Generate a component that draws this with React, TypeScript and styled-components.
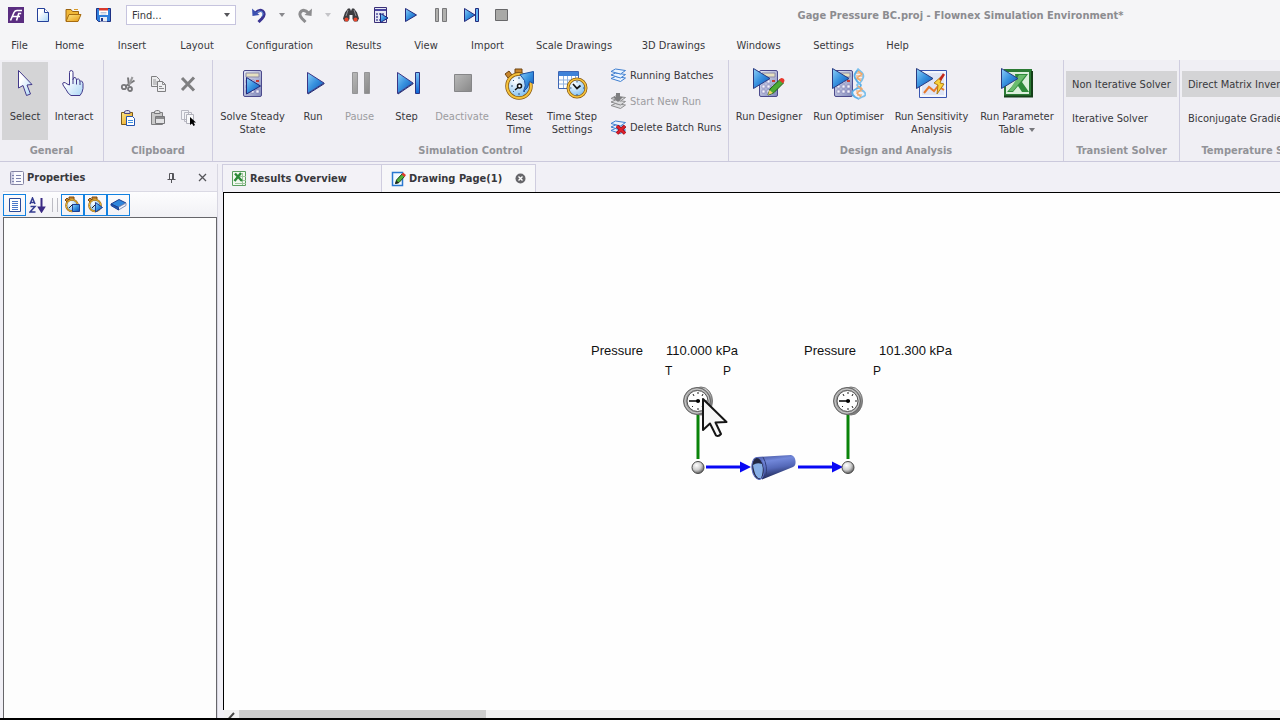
import React from 'react';
import styled, { createGlobalStyle, css } from 'styled-components';

const Global = createGlobalStyle`
  * { box-sizing: border-box; }
  body {
    margin: 0;
    background: #f5f5f7;
    color: #38383c;
    font: 11px/13px "DejaVu Sans Condensed", "DejaVu Sans", sans-serif;
  }
  button, select { font: inherit; color: inherit; }
  svg { display: block; flex: none; }
`;

/* ---------- layout ---------- */

const Shell = styled.div`
  display: flex;
  flex-direction: column;
  height: 100vh;
  overflow: hidden;
  border-bottom: 2px solid #000;
`;

const TitleBar = styled.header`
  display: flex;
  align-items: center;
  flex: none;
  height: 30px;
  padding-left: 8px;
`;

const Logo = styled.span`
  margin-right: 4px;
`;

const bare = css`
  border: 0;
  margin: 0;
  padding: 0;
  background: none;
`;

const QuickButton = styled.button<{ $narrow?: boolean }>`
  ${bare}
  display: flex;
  align-items: center;
  justify-content: center;
  flex: none;
  width: ${p => (p.$narrow ? 16 : 30)}px;
  height: 20px;
`;

const FindBox = styled.label`
  display: flex;
  align-items: center;
  position: relative;
  flex: none;
  width: 110px;
  height: 20px;
  margin: 0 8px;
  background: #fff;
  border: 1px solid #c6c4de;
  svg { position: absolute; right: 5px; pointer-events: none; }
`;

const FindSelect = styled.select`
  ${bare}
  appearance: none;
  width: 100%;
  height: 100%;
  padding-left: 5px;
  outline: 0;
`;

const Title = styled.h1`
  flex: 1;
  margin: 0;
  padding-left: 125px;
  font-size: 11px;
  font-weight: bold;
  color: #8c8c90;
  text-align: center;
  white-space: nowrap;
`;

const MenuBar = styled.nav`
  display: flex;
  flex: none;
  height: 30px;
`;

const MenuItem = styled.button<{ $w: number }>`
  ${bare}
  flex: none;
  width: ${p => p.$w}px;
  text-align: center;
  white-space: nowrap;
`;

const Ribbon = styled.section`
  display: flex;
  flex: none;
  overflow: hidden;
  background: #f0eff4;
  border-bottom: 1px solid #cbc9dc;
`;

const Group = styled.div<{ $w?: number }>`
  display: flex;
  flex-direction: column;
  flex: none;
  width: ${p => (p.$w ? `${p.$w}px` : 'auto')};
  padding: 2px 2px 0;
  border-right: 1px solid #cfcddf;
`;

const GroupBody = styled.div`
  display: flex;
  height: 78px;
`;

const GroupLabel = styled.h2`
  margin: 0;
  padding-top: 1px;
  font-size: 11px;
  font-weight: bold;
  line-height: 20px;
  color: #929398;
  text-align: center;
  white-space: nowrap;
`;

const BigButton = styled.button<{ $w: number; $on?: boolean }>`
  ${bare}
  display: flex;
  flex-direction: column;
  align-items: center;
  gap: 10px;
  flex: none;
  width: ${p => p.$w}px;
  padding-top: 6px;
  white-space: nowrap;
  background: ${p => (p.$on ? '#d4d4d6' : 'none')};
  &:disabled { color: #9c9ca0; }
`;

const Caption = styled.span`
  display: block;
  white-space: pre-line;
`;

const ClipGrid = styled.div`
  display: grid;
  grid-template-columns: repeat(3, 30px);
  grid-template-rows: repeat(2, 34px);
  justify-content: center;
  padding-top: 5px;
  width: 100%;
`;

const IconButton = styled.button`
  ${bare}
  display: flex;
  align-items: center;
  justify-content: center;
`;

const SmallList = styled.div`
  display: flex;
  flex-direction: column;
  margin-left: 10px;
`;

const SmallButton = styled.button`
  ${bare}
  display: flex;
  align-items: center;
  gap: 4px;
  height: 26px;
  white-space: nowrap;
  &:disabled { color: #9c9ca0; }
`;

const SolverList = styled.div`
  display: flex;
  flex-direction: column;
  gap: 8px;
  height: 78px;
  padding-top: 9px;
`;

const SolverButton = styled.button<{ $on?: boolean }>`
  ${bare}
  height: 26px;
  padding: 0 6px;
  text-align: left;
  white-space: nowrap;
  background: ${p => (p.$on ? '#d4d4d6' : 'none')};
`;

const Workspace = styled.main`
  display: flex;
  flex: 1;
  min-height: 0;
  padding-top: 2px;
  background: #f1f0f6;
`;

const Side = styled.aside`
  display: flex;
  flex-direction: column;
  flex: none;
  width: 218px;
  margin-right: 4px;
  padding-left: 3px;
  border-right: 1px solid #d8d7e2;
`;

const SideHead = styled.div`
  display: flex;
  align-items: center;
  height: 28px;
  padding: 0 10px 0 7px;
  border-bottom: 1px solid #dad9e4;
`;

const PanelTitle = styled.h2`
  flex: 1;
  margin: 0 0 0 3px;
  font-size: 11px;
  font-weight: bold;
`;

const HeadButton = styled.button`
  ${bare}
  margin-left: 22px;
`;

const SideTools = styled.div`
  display: flex;
  align-items: center;
  height: 25px;
  background: linear-gradient(#fdfdfe, #f1f1f5);
`;

const ToolButton = styled.button<{ $on?: boolean }>`
  ${bare}
  display: flex;
  align-items: center;
  justify-content: center;
  width: 23px;
  height: 22px;
  margin-right: ${p => (p.$on ? 0 : 3)}px;
  border: 1px solid ${p => (p.$on ? '#1281e0' : 'transparent')};
`;

const Bars = styled.span`
  width: 6px;
  height: 14px;
  margin-right: 3px;
  border: solid #bcbcc4;
  border-width: 0 1px;
`;

const PropertyArea = styled.div`
  flex: 1;
  background: #fdfdfd;
  border: 1px solid #66666a;
  border-bottom: 0;
`;

const Documents = styled.section`
  display: flex;
  flex-direction: column;
  flex: 1;
  min-width: 0;
`;

const Tabs = styled.div`
  display: flex;
  height: 28px;
`;

const Tab = styled.button<{ $on?: boolean }>`
  ${bare}
  display: flex;
  align-items: center;
  gap: 3px;
  min-width: ${p => (p.$on ? 154 : 160)}px;
  padding: 0 9px;
  font-weight: bold;
  white-space: nowrap;
  border: 1px solid #cfcddf;
  border-bottom: 0;
  border-left-width: ${p => (p.$on ? 0 : 1)}px;
  background: ${p => (p.$on ? '#f7f7f9' : '#f3f2f7')};
`;

const TabClose = styled.span`
  margin-left: auto;
`;

const Canvas = styled.div`
  position: relative;
  flex: 1;
  min-height: 0;
  margin-left: 1px;
  overflow: hidden;
  background: #fefefe;
  border: solid #000;
  border-width: 1px 0 0 1px;
`;

const Network = styled.svg`
  position: absolute;
  left: 440px;
  top: 180px;
`;

const Note = styled.span<{ $x: number; $y: number; $small?: boolean }>`
  position: absolute;
  left: ${p => p.$x}px;
  top: ${p => p.$y}px;
  font: ${p => (p.$small ? 12 : 13)}px/16px "Liberation Sans", Arial, sans-serif;
  color: #111;
  white-space: nowrap;
`;

const Scroll = styled.div`
  display: flex;
  flex: none;
  height: 8px;
  margin-left: 2px;
  overflow: hidden;
  background: #f0f0f1;
`;

const Thumb = styled.div`
  width: 247px;
  background: #cdcdcd;
`;

/* ---------- icons ---------- */

const SharedGradients = styled.svg`
  position: absolute;
`;

const Defs = () => (
  <SharedGradients width="0" height="0" aria-hidden="true">
    <defs>
      <linearGradient id="blue" x1="0" y1="0" x2="1" y2="1">
        <stop offset="0" stopColor="#8fd0f8" />
        <stop offset=".45" stopColor="#3a94e0" />
        <stop offset="1" stopColor="#0850b4" />
      </linearGradient>
      <linearGradient id="bar" x1="0" y1="0" x2="0" y2="1">
        <stop offset="0" stopColor="#7cc4f6" />
        <stop offset="1" stopColor="#0b64d4" />
      </linearGradient>
      <linearGradient id="grey" x1="0" y1="0" x2="1" y2="1">
        <stop offset="0" stopColor="#b9b9b9" />
        <stop offset="1" stopColor="#888" />
      </linearGradient>
      <linearGradient id="ice" x1="0" y1="0" x2="1" y2="1">
        <stop offset=".3" stopColor="#fff" />
        <stop offset="1" stopColor="#a9d6f6" />
      </linearGradient>
      <linearGradient id="case" x1="0" y1="0" x2="1" y2="1">
        <stop offset="0" stopColor="#e6e9f5" />
        <stop offset="1" stopColor="#8088ba" />
      </linearGradient>
      <linearGradient id="gold" x1="0" y1="0" x2="1" y2="1">
        <stop offset="0" stopColor="#ffe98a" />
        <stop offset="1" stopColor="#e59a12" />
      </linearGradient>
      <radialGradient id="dial" cx=".35" cy=".3" r=".8">
        <stop offset="0" stopColor="#fff" />
        <stop offset="1" stopColor="#6cb6f0" />
      </radialGradient>
      <radialGradient id="ball" cx=".38" cy=".32" r=".7">
        <stop offset="0" stopColor="#fff" />
        <stop offset=".55" stopColor="#cfcfcf" />
        <stop offset="1" stopColor="#5c5c5c" />
      </radialGradient>
      <linearGradient id="rim" x1="0" y1="0" x2="1" y2="1">
        <stop offset="0" stopColor="#777" />
        <stop offset=".4" stopColor="#d2d2d2" />
        <stop offset="1" stopColor="#555" />
      </linearGradient>
      <linearGradient id="pipe" x1="0" y1="0" x2=".25" y2="1">
        <stop offset="0" stopColor="#3f4d96" />
        <stop offset=".3" stopColor="#7288da" />
        <stop offset=".6" stopColor="#5468b8" />
        <stop offset="1" stopColor="#1c2450" />
      </linearGradient>
    </defs>
  </SharedGradients>
);

type IconProps = { w?: number; h?: number; children?: React.ReactNode };
const Icon = ({ w = 16, h = w > 20 ? 32 : 16, children }: IconProps) => (
  <svg width={w} height={h} viewBox={`0 0 ${w} ${h}`} fill="none" aria-hidden="true">{children}</svg>
);

const CaretIcon = ({ color = '#55555a' }: { color?: string }) => (
  <Icon w={6} h={4}><path d="M0 0h6L3 4z" fill={color} /></Icon>
);

const LogoIcon = () => (
  <Icon>
    <path d="M0 0h16v16H0z" fill="#5a2d80" />
    <path d="M2.500 13.500 6 5.500Q7 3.500 9 3.500h5M4.500 9.500H12M8.500 13.500l2.200-7h2.500" stroke="#fff" strokeWidth="1.600" />
  </Icon>
);

const NewIcon = () => (
  <Icon w={14}>
    <path d="M1.500 1.500h7l4 4v9h-11z" fill="url(#ice)" stroke="#24409a" />
    <path d="M8.500 1.500v4h4" fill="#fff" stroke="#24409a" />
  </Icon>
);

const OpenIcon = () => (
  <Icon w={17}>
    <path d="M1 14V2.500h5l1.500 2h6V8" fill="#f0b838" stroke="#9c6410" />
    <path d="M1 14.500 4 7.500h12l-3 7z" fill="url(#gold)" stroke="#a86c10" />
    <path d="M9 2.500h4" stroke="#d89a28" />
  </Icon>
);

const SaveIcon = () => (
  <Icon w={15}>
    <path d="M.5 1.500h14v13h-12l-2-2z" fill="#2f7fdc" stroke="#1d3184" />
    <path d="M3 2h9v6H3z" fill="#fff" />
    <path d="M3 1h9v2.500H3z" fill="#d83a2c" />
    <path d="M4.500 5.500h6M4.500 7h6" stroke="#b9c4d8" />
    <path d="M4 10h7v4.500H4z" fill="#e8ecf4" />
    <path d="M5 11h2v3H5z" fill="#1d3184" />
  </Icon>
);

const UndoIcon = ({ off }: { off?: boolean }) => (
  <Icon>
    <g transform={off ? 'matrix(-1 0 0 1 16 0)' : undefined}>
      <path d="M4 6.500Q8 2 11.500 4 15 7 11 11.500L7.500 15" stroke={off ? '#8d8d8f' : '#3b3492'} strokeWidth="3" />
      {!off && <path d="M5 6Q8 3 11 4.500q2.500 2 0 5" stroke="#5b8bd8" />}
      <path d="M1 1.500 1.500 9l7-1z" fill={off ? '#8d8d8f' : '#3b50b0'} />
    </g>
  </Icon>
);

const BinocularsIcon = () => (
  <Icon>
    <path d="M5 1.500h2L8 4l1-2.500h2l3 4 2 6-1.500 3H11L9.500 12V8h-3v4L5 14.500H1.500L0 11.500l2-6z" fill="#3c3c40" />
    <path d="M5 3 3 9M11 3l2 6" stroke="#8e8e94" />
    <circle cx="3.500" cy="12.500" r="2" fill="#e8462c" />
    <circle cx="12.500" cy="12.500" r="2" fill="#e8462c" />
  </Icon>
);

const SmallCalcIcon = () => (
  <Icon>
    <path d="M1.500.5h12v15h-12z" fill="#e6e8f4" stroke="#3a2f78" />
    <path d="M2 2h11v2H2z" fill="#4a46a0" />
    <path d="M3 6h2v2H3zM6 6h2v2H6zM9 6h2v2H9zM3 9h2v2H3zM3 12h2v2H3zM6 12h2v2H6z" fill="#7778b4" />
    <path d="M7.500 6.500 15 11l-7.500 4.500z" fill="url(#blue)" stroke="#20277c" />
  </Icon>
);

const PlayIcon = () => (
  <Icon w={14}><path d="M1.500 1.500 12.500 8l-11 6.500z" fill="url(#blue)" stroke="#242a7c" /></Icon>
);

const PauseIcon = () => (
  <Icon w={14}>
    <path d="M1.500 1.500h3v13h-3zM8.500 1.500h4v13h-4z" fill="#b0b0ae" stroke="#78787a" />
  </Icon>
);

const StepIcon = () => (
  <Icon w={17}>
    <path d="M1.500 1.500 12 8 1.500 14.500z" fill="url(#blue)" stroke="#242a7c" />
    <path d="M12.500 1.500h3v13h-3z" fill="#62b4f2" stroke="#242a7c" />
  </Icon>
);

const StopIcon = () => (
  <Icon w={13}><path d="M.5 2.500h12v11H.5z" fill="#a9a9a7" stroke="#68686a" /></Icon>
);

const SelectIcon = () => (
  <Icon w={32}>
    <path d="M9.500 2.500v17.500l4.500-2.500 3.500 10 4-1.500-3.500-9 5-.5z" fill="url(#ice)" stroke="#42388a" />
  </Icon>
);

const HandIcon = () => (
  <Icon w={32}>
    <path
      d="M11.500 17V4.500q0-2 1.750-2t1.750 2v7q.5-2.500 2-2t1.500 2.500q.5-1.500 2-1t1.500 2.500q.5-1 1.500-.5t1.500 2.500v5q-.5 4-3 7h-9q-3-1.500-5-6l-3-4.500q-1-2.500 1-2.500 1.500 0 3 1.500z"
      fill="url(#ice)" stroke="#42388a"
    />
    <path d="M15 11v5M18.500 12v4.500M22 13.500V17" stroke="#42388a" />
  </Icon>
);

const CutIcon = () => (
  <Icon>
    <path d="M8 1.500 9 10M14.500 4.500 5 10.500" stroke="#777779" strokeWidth="2" />
    <path d="m12.500 1-3.500 8" stroke="#9a9a9c" strokeWidth="2" />
    <circle cx="4" cy="11" r="2.200" stroke="#77777a" strokeWidth="1.800" />
    <circle cx="10" cy="13" r="2" stroke="#77777a" strokeWidth="1.800" />
  </Icon>
);

const CopyIcon = () => (
  <Icon w={17}>
    <path d="M1.500.5h5l3 3v7h-8z" fill="#ececee" stroke="#7e7e80" />
    <path d="M3 4h3M3 6h4M3 8h4" stroke="#9a9a9c" />
    <path d="M7.500 5.500h5l3 3v7h-8z" fill="#f0f0f2" stroke="#7e7e80" />
    <path d="M12.500 5.500v3h3M9 10.500h3M9 12.500h5" stroke="#8e8e90" />
  </Icon>
);

const CrossIcon = () => (
  <Icon><path d="m2 2 12 12.500M14 1.500 2 14" stroke="#7f7f81" strokeWidth="3" /></Icon>
);

const PasteIcon = () => (
  <Icon>
    <path d="M1.500 2.500h11v12h-11z" fill="url(#gold)" stroke="#7a5a1a" />
    <path d="M4.500 3.500v-2l2-1h2l1.500 1v2z" fill="#d8d8e4" stroke="#4e467e" />
    <path d="M6.500 6.500h6l2 2v7h-8z" fill="#fff" stroke="#2353b0" />
    <path d="M8 10.500h5M8 12.500h5" stroke="#3f8fe0" />
  </Icon>
);

const PasteSpecialIcon = () => (
  <Icon>
    <path d="M1.500 2.500h11v12h-11z" fill="#c9c9c9" stroke="#7e7e80" />
    <path d="M4.500 3.500v-2l2-1h2l1.500 1v2z" fill="#ddd" stroke="#77777a" />
    <path d="M5.500 6.500h9v7h-9z" fill="#e2e2e4" stroke="#77777a" />
    <path d="M6 8h8" stroke="#8a8a8c" strokeWidth="2" />
  </Icon>
);

const PickCopyIcon = () => (
  <Icon>
    <path d="M1.500.5h7v9h-7zM4.500 2.500h7v9h-7z" fill="#f4f4f8" stroke="#b8b8c2" />
    <path d="M6.500 4.500h7v9h-7z" fill="#f8f8fa" stroke="#b0b0ba" />
    <path d="M10 7v8l2-1.500 1.500 2.500 1.500-1-1.500-2.500H16z" fill="#000" />
  </Icon>
);

const CalcBody = () => (
  <>
    <rect x="6.500" y="2.500" width="18" height="26" rx="1.500" fill="url(#case)" stroke="#4c4a8c" />
    <path d="M9 5h13v4H9z" fill="#e6e1c0" stroke="#8d8aa8" />
    <path d="M9 12h3v3H9zM14 12h3v3h-3zM9 17h3v3H9zM14 17h3v3h-3zM19 17h3v3h-3zM9 22h3v3H9zM14 22h3v3h-3zM19 22h3v3h-3z" fill="#f4f4fa" stroke="#7472ac" strokeWidth=".5" />
    <path d="M19 12h3v2h-3z" fill="#cc3a30" />
  </>
);

const SolveIcon = () => (
  <Icon w={32}>
    <CalcBody />
    <path d="M9.500 9.500 23.500 18 9.500 26z" fill="url(#blue)" stroke="#20277c" />
  </Icon>
);

const BigPlayIcon = () => (
  <Icon w={32}>
    <path d="M10.500 4.500 27 15 10.500 25.500z" fill="url(#blue)" stroke="#3a3585" />
    <path d="M11 26 27.500 15.500" stroke="#1d2a70" />
  </Icon>
);

const BigPauseIcon = () => (
  <Icon w={32}>
    <path d="M8.500 4.500h5v21h-5zM20.500 4.500h5v21h-5z" fill="url(#grey)" stroke="#959597" />
  </Icon>
);

const BigStepIcon = () => (
  <Icon w={32}>
    <path d="M6.500 4.500 22 15 6.500 25.500z" fill="url(#blue)" stroke="#3a3585" />
    <path d="M7 26 22.500 15.500" stroke="#1d2a70" />
    <path d="M24.500 4.500h4v21h-4z" fill="url(#bar)" stroke="#2c3484" />
  </Icon>
);

const BigStopIcon = () => (
  <Icon w={32}><path d="M8.500 6.500h17v17h-17z" fill="url(#grey)" stroke="#868688" /></Icon>
);

const ResetIcon = () => (
  <Icon w={32}>
    <path d="M12 1h7v4h-7zM2 6l4-3 3 4-4 3z" fill="#c8862c" stroke="#6e4310" />
    <path d="M14 5h4v3h-4z" fill="#e6a63c" />
    <circle cx="16" cy="18" r="12" fill="url(#dial)" stroke="#8a5a10" strokeWidth="3.500" />
    <circle cx="16" cy="18" r="12" stroke="#f6c33c" strokeWidth="2" />
    <path d="M16 9v2M8 18h2M22 18h2M16 25v2M10 12l1 1M10 24l1-1M22 24l-1-1" stroke="#33557c" />
    <path d="m12 22 6-5" stroke="#111" strokeWidth="1.500" />
    <circle cx="16.500" cy="18" r="2" fill="#fff" stroke="#111" strokeWidth="1.500" />
    <path d="M17 6.500 30.500 3.500v12l-4-2q-1 7-6 10 3-6 1-11z" fill="url(#blue)" stroke="#1c50a4" />
  </Icon>
);

const TimeStepIcon = () => (
  <Icon w={32}>
    <path d="M2.500 3.500h20v17h-20z" fill="#fff" stroke="#3e66b4" />
    <path d="M3 4h19v4H3z" fill="#3f82d8" />
    <path d="M3 12h19M3 16h19M7.500 8v12M11.500 8v12M15.500 8v12M19.500 8v12" stroke="#8fb2e0" />
    <circle cx="21" cy="20" r="9" fill="url(#dial)" stroke="#8a5a10" strokeWidth="3" />
    <circle cx="21" cy="20" r="9" stroke="#f6c33c" strokeWidth="1.500" />
    <path d="m17 16 4 4.500 3.500-3" stroke="#151515" strokeWidth="1.700" />
    <path d="M21 13v1.500M21 26v1.500M14 20h1.500M27 20h1.500" stroke="#33557c" />
  </Icon>
);

const Layers = ({ c, f }: { c: string; f: string }) => (
  <g fill={f} stroke={c}>
    <path d="m1 11.500 4.500-2 10 1.500-5 3.500z" />
    <path d="m1 8 4.500-2 10 1.500-5 3.500z" />
    <path d="m1 4.500 4.500-2.500 10 1.500-5 3.500z" />
  </g>
);

const BatchIcon = () => <Icon><Layers c="#3f7fd0" f="#e9f3ff" /></Icon>;

const StartBatchIcon = () => (
  <Icon>
    <g transform="translate(0 1)"><Layers c="#8c8c8e" f="#dcdcde" /></g>
    <path d="M6 0h4v4h3L8 9 3 4h3z" fill="#7e7e80" />
  </Icon>
);

const DeleteBatchIcon = () => (
  <Icon>
    <Layers c="#3f7fd0" f="#e9f3ff" />
    <path d="m7 7 8 7.500M15 7l-8 7.500" stroke="#8c0d18" strokeWidth="3.500" />
    <path d="m7 7 8 7.500M15 7l-8 7.500" stroke="#e0202c" strokeWidth="2.200" />
  </Icon>
);

const CornerPlay = () => (
  <path d="M.5.500 17 10.500.5 20.500z" fill="url(#blue)" stroke="#2a3a80" />
);

const DesignerIcon = () => (
  <Icon w={32}>
    <CalcBody />
    <CornerPlay />
    <path d="M15 27 17 21 27 11.500l3.500 3.500-10 10z" fill="#4cab34" stroke="#1e5c14" />
    <path d="m26 12 2-2q3.500 0 3.500 3l-1.500 2.500z" fill="#e8382c" />
    <path d="m15 27 1.500-5 3.500 3z" fill="#f2d06a" />
  </Icon>
);

const OptimiserIcon = () => (
  <Icon w={34}>
    <g transform="translate(-4 0)"><CalcBody /></g>
    <CornerPlay />
    <path d="M24 5h6M24 8h7M24 11h6M24 20h6M24 23h7M25 27h5" stroke="#f0a060" />
    <path d="M27 1q-6 5-4 9t5 6-4 5-1 8l4 2" stroke="#58aee8" strokeWidth="1.800" />
    <path d="M25 1q8 4 6 9t-5 6 4 6 0 7l-4 2" stroke="#7cc0ec" strokeWidth="1.800" />
    <path d="m26 3 4 3-5 4 4 3M26 18l4 3-5 4 4 4" stroke="#f0a868" strokeWidth="1.500" />
  </Icon>
);

const SensitivityIcon = () => (
  <Icon w={32}>
    <path d="M3.500 2.500h27v27h-27z" fill="#f4f6fc" stroke="#3a56b0" />
    <path d="M6 5h22v22H6z" fill="#dfe5f5" />
    <path d="m8 25 5-6 5 4 4-5 6 4" stroke="#e87a2c" strokeWidth="2" />
    <path d="m27 7-9 8 4 2-1 9 7-10-4-1z" fill="#f8d23c" stroke="#b07c14" />
    <path d="m24 12 4-6" stroke="#c4281c" strokeWidth="2.500" />
    <CornerPlay />
  </Icon>
);

const ExcelIcon = () => (
  <Icon w={32}>
    <path d="M3 1h28v28H3z" fill="#2b7a34" />
    <path d="M5 4h23v22H5z" fill="#dcefdc" />
    <path d="M14 6h13l-6 8 7 10h-7l-4-6-5 6H6l9-10z" fill="#2f8a3a" />
    <path d="M18 7h7l-13 16H8z" fill="#6abb6c" />
    <path d="M3 28.500h28V3" stroke="#143f18" strokeWidth="2" />
    <CornerPlay />
  </Icon>
);

const ListIcon = () => (
  <Icon w={14}>
    <rect x=".5" y="1.500" width="13" height="13" rx="1" fill="#fafafe" stroke="#8484a4" />
    <path d="M1 2h3v12H1z" fill="#d2d2e6" />
    <path d="M2 5.500h2M2 8.500h2M2 11.500h2M6 5.500h5M6 8.500h5M6 11.500h5" stroke="#7d83ac" />
  </Icon>
);

const PinIcon = () => (
  <Icon w={9} h={10}><path d="M2.500 6V.5h4V6M5.500 1v5M.5 6.500h8M4.500 7v3" stroke="#55555a" /></Icon>
);

const CloseIcon = () => (
  <Icon w={9} h={9}><path d="m1 1 7 7M8 1 1 8" stroke="#55555a" strokeWidth="1.300" /></Icon>
);

const CategoryIcon = () => (
  <Icon w={14}>
    <path d="M1.500 1.500h11v13h-11z" fill="#fff" stroke="#2a4a98" />
    <path d="M4 4.500h6M4 6.500h6M4 8.500h6M4 10.500h6M4 12.500h6" stroke="#4a78c8" />
  </Icon>
);

const SortIcon = () => (
  <Icon w={17}>
    <path d="M1 7 3.500 1 6 7M2 5.500h3M1.500 9.500H6l-5 5.500h5.500" stroke="#343c90" strokeWidth="1.500" />
    <path d="M12.500 1v12M10 10.500l2.500 4 2.500-4z" fill="#3b2a84" stroke="#3b2a84" strokeWidth="2" />
  </Icon>
);

const WatchIcon = ({ children }: { children: React.ReactNode }) => (
  <Icon w={17} h={17}>
    <path d="M5 1h5v2.500H5zM1 4l2-2 2 2-2 2z" fill="#c8862c" stroke="#7a4a12" />
    <circle cx="8" cy="9.500" r="5.800" fill="url(#dial)" stroke="#8a5a10" strokeWidth="2" />
    <circle cx="8" cy="9.500" r="5.800" stroke="#f6c33c" />
    <path d="M5 12l4-4" stroke="#222" />
    {children}
  </Icon>
);

const BookIcon = () => (
  <Icon w={17} h={12}>
    <path d="m1 5 8-4.500L16 4l-8 4.500z" fill="#2f86dc" stroke="#1c3f90" />
    <path d="m8 8.500 8-4.500v2.500L8.500 11z" fill="#eef2fa" stroke="#8090b8" />
    <path d="M1 5v1.500L8.500 11V8.500z" fill="#1e5cb8" stroke="#1c3f90" />
  </Icon>
);

const SheetIcon = () => (
  <Icon w={15}>
    <path d="M.5.5h13v14H.5z" fill="#f2f8f0" stroke="#5a9e60" />
    <path d="M8 5.500h6M8 9.500h6M3 12.500h11M10.500 2v12" stroke="#9cc49c" />
    <path d="m3 2.500 7 7.500M9 2l-6.500 8" stroke="#2c8a38" strokeWidth="2.400" />
  </Icon>
);

const PageIcon = () => (
  <Icon w={15}>
    <path d="M1.500 1.500h10v13h-10z" fill="#f4faff" stroke="#2a78d0" strokeWidth="1.500" />
    <path d="M4.500 12.500 5.500 9 11 3l2.500 2.500-5.500 6z" fill="#52b03a" stroke="#1d4d14" />
    <path d="m10.500 3.500 1.500-2 3 2.500-1.500 2z" fill="#e03a2c" />
    <path d="m4 13 1.500-3.500L8 12z" fill="#222" />
  </Icon>
);

const TabCloseIcon = () => (
  <Icon w={11} h={11}>
    <circle cx="5.500" cy="5.500" r="5" fill="#66666a" />
    <path d="m3.500 3.500 4 4M7.500 3.500l-4 4" stroke="#fff" strokeWidth="1.400" />
  </Icon>
);

const Gauge = () => (
  <g>
    <ellipse cx="3" cy="0" rx="11.500" ry="14" fill="url(#rim)" stroke="#777" />
    <circle cx="-1" cy="0" r="13.500" fill="#9b9b9b" stroke="#666" />
    <circle cx="-1" cy="0" r="12" stroke="#c8c8c8" />
    <circle cx="-.5" cy="0" r="10.500" fill="#fdfdfd" stroke="#555" />
    <path d="M0-9v2M-5-7l1 2M5-7 4-5M7 0h2M-6 6l1-1M5 7 4 5M0 7v2" stroke="#222" />
    <path d="M-9 0H2" stroke="#000" strokeWidth="1.500" />
    <circle cx="0" cy="0" r="2" fill="#000" />
  </g>
);

const PipeNetwork = () => (
  <Network width="220" height="120" viewBox="0 0 220 120" fill="none" role="img" aria-label="Pipe network">
    <path d="M34 40v46M184 40v46" stroke="#0a840a" strokeWidth="3" />
    <path d="M42 94h36M134 94h36" stroke="#0808f4" strokeWidth="3" />
    <path d="m76 88.500 11 5.500-11 5.500zM168 88.500l11 5.500-11 5.500z" fill="#0808f4" />
    <circle cx="34" cy="94.500" r="6" fill="url(#ball)" stroke="#4a4a4a" />
    <circle cx="184" cy="94.500" r="6" fill="url(#ball)" stroke="#4a4a4a" />
    <path d="M93 84 127 82q4 1 4.500 6t-2.500 6l-31 12.500z" fill="url(#pipe)" />
    <path d="M99 84q5 9 3 20" stroke="#34407c" />
    <ellipse cx="94" cy="95.500" rx="6" ry="11" transform="rotate(-8 94 95.500)" fill="#232844" stroke="#5a6cc0" />
    <path d="M89 92q4-3 9-1 2 7-1 14-3 1-5-2.500T89 92z" fill="#86aee6" />
    <g transform="translate(34 28)"><Gauge /></g>
    <g transform="translate(184 28)"><Gauge /></g>
    <path d="M39 26v31l7-6.500 6 12q2.500 1.500 5-1.500l-5.500-11.500 11-.5z" fill="#f7f7f7" stroke="#151515" strokeWidth="2" strokeLinejoin="round" />
  </Network>
);

const ScrollLeftIcon = () => (
  <Icon w={15} h={17}><path d="m10 3-5 5.500 5 5" stroke="#444" strokeWidth="2" /></Icon>
);

/* ---------- data ---------- */

const menus: [string, number][] = [
  ['File', 39], ['Home', 61], ['Insert', 64], ['Layout', 66], ['Configuration', 99],
  ['Results', 69], ['View', 56], ['Import', 67], ['Scale Drawings', 106],
  ['3D Drawings', 93], ['Windows', 77], ['Settings', 73], ['Help', 55],
];

type Command = { text: string; w: number; icon: React.ReactNode; off?: boolean; on?: boolean; menu?: boolean };

const general: Command[] = [
  { text: 'Select', w: 46, icon: <SelectIcon />, on: true },
  { text: 'Interact', w: 52, icon: <HandIcon /> },
];

const simulation: Command[] = [
  { text: 'Solve Steady\nState', w: 75, icon: <SolveIcon /> },
  { text: 'Run', w: 46, icon: <BigPlayIcon /> },
  { text: 'Pause', w: 47, icon: <BigPauseIcon />, off: true },
  { text: 'Step', w: 47, icon: <BigStepIcon /> },
  { text: 'Deactivate', w: 64, icon: <BigStopIcon />, off: true },
  { text: 'Reset\nTime', w: 50, icon: <ResetIcon /> },
  { text: 'Time Step\nSettings', w: 56, icon: <TimeStepIcon /> },
];

const analysis: Command[] = [
  { text: 'Run Designer', w: 76, icon: <DesignerIcon /> },
  { text: 'Run Optimiser', w: 83, icon: <OptimiserIcon /> },
  { text: 'Run Sensitivity\nAnalysis', w: 83, icon: <SensitivityIcon /> },
  { text: 'Run Parameter\nTable', w: 88, icon: <ExcelIcon />, menu: true },
];

const MenuCaret = styled.span`
  display: inline-block;
  margin-left: 5px;
  vertical-align: middle;
`;

const Commands = ({ items }: { items: Command[] }) => (
  <>
    {items.map(c => (
      <BigButton key={c.text} $w={c.w} $on={c.on} disabled={c.off}>
        {c.icon}
        <Caption>
          {c.text}
          {c.menu && <MenuCaret><CaretIcon color="#77777c" /></MenuCaret>}
        </Caption>
      </BigButton>
    ))}
  </>
);

export default function App() {
  return (
    <Shell>
      <Global />
      <Defs />
      <TitleBar>
        <Logo><LogoIcon /></Logo>
        <QuickButton aria-label="New"><NewIcon /></QuickButton>
        <QuickButton aria-label="Open"><OpenIcon /></QuickButton>
        <QuickButton aria-label="Save"><SaveIcon /></QuickButton>
        <FindBox>
          <FindSelect aria-label="Find"><option>Find...</option></FindSelect>
          <CaretIcon />
        </FindBox>
        <QuickButton aria-label="Undo"><UndoIcon /></QuickButton>
        <QuickButton $narrow aria-label="Undo history"><CaretIcon color="#88888c" /></QuickButton>
        <QuickButton aria-label="Redo"><UndoIcon off /></QuickButton>
        <QuickButton $narrow aria-label="Redo history"><CaretIcon color="#c4c4c8" /></QuickButton>
        <QuickButton aria-label="Search"><BinocularsIcon /></QuickButton>
        <QuickButton aria-label="Solve"><SmallCalcIcon /></QuickButton>
        <QuickButton aria-label="Run"><PlayIcon /></QuickButton>
        <QuickButton aria-label="Pause"><PauseIcon /></QuickButton>
        <QuickButton aria-label="Step"><StepIcon /></QuickButton>
        <QuickButton aria-label="Stop"><StopIcon /></QuickButton>
        <Title>Gage Pressure BC.proj - Flownex Simulation Environment*</Title>
      </TitleBar>

      <MenuBar>
        {menus.map(([name, w]) => <MenuItem key={name} $w={w}>{name}</MenuItem>)}
      </MenuBar>

      <Ribbon>
        <Group $w={104}>
          <GroupBody><Commands items={general} /></GroupBody>
          <GroupLabel>General</GroupLabel>
        </Group>
        <Group $w={109}>
          <GroupBody>
            <ClipGrid>
              <IconButton aria-label="Cut"><CutIcon /></IconButton>
              <IconButton aria-label="Copy"><CopyIcon /></IconButton>
              <IconButton aria-label="Delete"><CrossIcon /></IconButton>
              <IconButton aria-label="Paste"><PasteIcon /></IconButton>
              <IconButton aria-label="Paste special"><PasteSpecialIcon /></IconButton>
              <IconButton aria-label="Copy selection"><PickCopyIcon /></IconButton>
            </ClipGrid>
          </GroupBody>
          <GroupLabel>Clipboard</GroupLabel>
        </Group>
        <Group $w={516}>
          <GroupBody>
            <Commands items={simulation} />
            <SmallList>
              <SmallButton><BatchIcon />Running Batches</SmallButton>
              <SmallButton disabled><StartBatchIcon />Start New Run</SmallButton>
              <SmallButton><DeleteBatchIcon />Delete Batch Runs</SmallButton>
            </SmallList>
          </GroupBody>
          <GroupLabel>Simulation Control</GroupLabel>
        </Group>
        <Group $w={335}>
          <GroupBody><Commands items={analysis} /></GroupBody>
          <GroupLabel>Design and Analysis</GroupLabel>
        </Group>
        <Group $w={116}>
          <SolverList>
            <SolverButton $on>Non Iterative Solver</SolverButton>
            <SolverButton>Iterative Solver</SolverButton>
          </SolverList>
          <GroupLabel>Transient Solver</GroupLabel>
        </Group>
        <Group $w={154}>
          <SolverList>
            <SolverButton $on>Direct Matrix Inversion</SolverButton>
            <SolverButton>Biconjugate Gradient</SolverButton>
          </SolverList>
          <GroupLabel>Temperature Solver</GroupLabel>
        </Group>
      </Ribbon>

      <Workspace>
        <Side>
          <SideHead>
            <ListIcon />
            <PanelTitle>Properties</PanelTitle>
            <HeadButton aria-label="Pin"><PinIcon /></HeadButton>
            <HeadButton aria-label="Close"><CloseIcon /></HeadButton>
          </SideHead>
          <SideTools>
            <ToolButton $on aria-label="Categorised"><CategoryIcon /></ToolButton>
            <ToolButton aria-label="Alphabetical"><SortIcon /></ToolButton>
            <Bars />
            <ToolButton $on aria-label="Steady inputs">
              <WatchIcon><path d="M8.500 8.500h7v7h-7z" fill="url(#blue)" stroke="#1d3f94" /></WatchIcon>
            </ToolButton>
            <ToolButton $on aria-label="Transient inputs">
              <WatchIcon><path d="m8.500 6.500 7 5-7 4.500z" fill="url(#blue)" stroke="#1d3f94" /></WatchIcon>
            </ToolButton>
            <ToolButton $on aria-label="Help"><BookIcon /></ToolButton>
          </SideTools>
          <PropertyArea />
        </Side>

        <Documents>
          <Tabs>
            <Tab><SheetIcon />Results Overview</Tab>
            <Tab $on>
              <PageIcon />Drawing Page(1)
              <TabClose><TabCloseIcon /></TabClose>
            </Tab>
          </Tabs>
          <Canvas>
            <Note $x={367} $y={150}>Pressure</Note>
            <Note $x={442} $y={150}>110.000 kPa</Note>
            <Note $x={441} $y={170} $small>T</Note>
            <Note $x={499} $y={170} $small>P</Note>
            <Note $x={580} $y={150}>Pressure</Note>
            <Note $x={655} $y={150}>101.300 kPa</Note>
            <Note $x={649} $y={170} $small>P</Note>
            <PipeNetwork />
          </Canvas>
          <Scroll>
            <ScrollLeftIcon />
            <Thumb />
          </Scroll>
        </Documents>
      </Workspace>
    </Shell>
  );
}
